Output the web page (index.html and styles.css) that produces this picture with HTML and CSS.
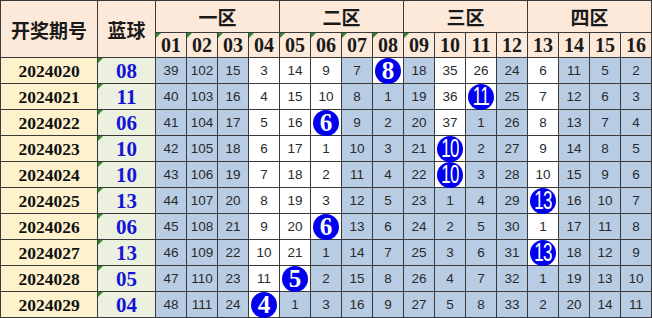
FILE: index.html
```html
<!DOCTYPE html>
<html lang="zh">
<head>
<meta charset="utf-8">
<title>蓝球遗漏</title>
<link rel="stylesheet" href="styles.css">
</head>
<body>
<table class="grid">
<colgroup>
<col class="c-date"><col class="c-blue">
<col class="c-n"><col class="c-n"><col class="c-n"><col class="c-n">
<col class="c-n"><col class="c-n"><col class="c-n"><col class="c-n">
<col class="c-n"><col class="c-n"><col class="c-n"><col class="c-n">
<col class="c-n"><col class="c-n"><col class="c-n"><col class="c-n">
</colgroup>
<thead>
<tr class="h1">
<th rowspan="2" class="hd">开奖期号</th>
<th rowspan="2" class="hd">蓝球</th>
<th colspan="4" class="zone">一区</th>
<th colspan="4" class="zone">二区</th>
<th colspan="4" class="zone">三区</th>
<th colspan="4" class="zone">四区</th>
</tr>
<tr class="h2">
<th class="num tri">01</th><th class="num tri">02</th><th class="num tri">03</th><th class="num tri">04</th>
<th class="num tri">05</th><th class="num tri">06</th><th class="num tri">07</th><th class="num tri">08</th>
<th class="num tri">09</th><th class="num">10</th><th class="num">11</th><th class="num">12</th>
<th class="num">13</th><th class="num">14</th><th class="num">15</th><th class="num">16</th>
</tr>
</thead>
<tbody>
<tr><td class="date">2024020</td><td class="blue tri">08</td>
<td>39</td><td>102</td><td>15</td><td class="w">3</td><td class="w">14</td><td class="w">9</td><td>7</td><td class="w"><span class="ball">8</span></td>
<td>18</td><td class="w">35</td><td class="w">26</td><td>24</td><td class="w">6</td><td>11</td><td>5</td><td>2</td></tr>
<tr><td class="date">2024021</td><td class="blue tri">11</td>
<td>40</td><td>103</td><td>16</td><td class="w">4</td><td class="w">15</td><td class="w">10</td><td>8</td><td>1</td>
<td>19</td><td class="w">36</td><td class="w"><span class="ball two"><span class="narrow">11</span></span></td><td>25</td><td class="w">7</td><td>12</td><td>6</td><td>3</td></tr>
<tr><td class="date">2024022</td><td class="blue tri">06</td>
<td>41</td><td>104</td><td>17</td><td class="w">5</td><td class="w">16</td><td class="w"><span class="ball">6</span></td><td>9</td><td>2</td>
<td>20</td><td class="w">37</td><td>1</td><td>26</td><td class="w">8</td><td>13</td><td>7</td><td>4</td></tr>
<tr><td class="date">2024023</td><td class="blue tri">10</td>
<td>42</td><td>105</td><td>18</td><td class="w">6</td><td class="w">17</td><td class="w">1</td><td>10</td><td>3</td>
<td>21</td><td class="w"><span class="ball two"><span class="narrow">10</span></span></td><td>2</td><td>27</td><td class="w">9</td><td>14</td><td>8</td><td>5</td></tr>
<tr><td class="date">2024024</td><td class="blue tri">10</td>
<td>43</td><td>106</td><td>19</td><td class="w">7</td><td class="w">18</td><td class="w">2</td><td>11</td><td>4</td>
<td>22</td><td class="w"><span class="ball two"><span class="narrow">10</span></span></td><td>3</td><td>28</td><td class="w">10</td><td>15</td><td>9</td><td>6</td></tr>
<tr><td class="date">2024025</td><td class="blue tri">13</td>
<td>44</td><td>107</td><td>20</td><td class="w">8</td><td class="w">19</td><td class="w">3</td><td>12</td><td>5</td>
<td>23</td><td>1</td><td>4</td><td>29</td><td class="w"><span class="ball two"><span class="narrow">13</span></span></td><td>16</td><td>10</td><td>7</td></tr>
<tr><td class="date">2024026</td><td class="blue tri">06</td>
<td>45</td><td>108</td><td>21</td><td class="w">9</td><td class="w">20</td><td class="w"><span class="ball">6</span></td><td>13</td><td>6</td>
<td>24</td><td>2</td><td>5</td><td>30</td><td class="w">1</td><td>17</td><td>11</td><td>8</td></tr>
<tr><td class="date">2024027</td><td class="blue tri">13</td>
<td>46</td><td>109</td><td>22</td><td class="w">10</td><td class="w">21</td><td>1</td><td>14</td><td>7</td>
<td>25</td><td>3</td><td>6</td><td>31</td><td class="w"><span class="ball two"><span class="narrow">13</span></span></td><td>18</td><td>12</td><td>9</td></tr>
<tr><td class="date">2024028</td><td class="blue tri">05</td>
<td>47</td><td>110</td><td>23</td><td class="w">11</td><td class="w"><span class="ball">5</span></td><td>2</td><td>15</td><td>8</td>
<td>26</td><td>4</td><td>7</td><td>32</td><td>1</td><td>19</td><td>13</td><td>10</td></tr>
<tr><td class="date">2024029</td><td class="blue tri">04</td>
<td>48</td><td>111</td><td>24</td><td class="w"><span class="ball">4</span></td><td>1</td><td>3</td><td>16</td><td>9</td>
<td>27</td><td>5</td><td>8</td><td>33</td><td>2</td><td>20</td><td>14</td><td>11</td></tr>
</tbody>
</table>
</body>
</html>
```
FILE: styles.css
```css
html, body {
  margin: 0;
  padding: 0;
  background: #ffffff;
}

.grid {
  border-collapse: collapse;
  table-layout: fixed;
  width: 652px;
  font-family: "Liberation Sans", Arial, sans-serif;
}

.c-date { width: 97px; }
.c-blue { width: 58px; }
.c-n { width: 31px; }

.grid th,
.grid td {
  border: 1px solid #3a3a3a;
  padding: 0;
  text-align: center;
  vertical-align: middle;
  overflow: visible;
  white-space: nowrap;
}

.grid th {
  background: #fde9d9;
  color: #1a1a1a;
  font-weight: bold;
}

.h1 { height: 32px; }
.h2 { height: 25px; }

.hd {
  font-family: "Noto Sans CJK SC", sans-serif;
  font-size: 19px;
  font-weight: bold;
}

.zone {
  font-family: "Noto Sans CJK SC", sans-serif;
  font-size: 19px;
  font-weight: bold;
}

.num {
  font-family: "Liberation Serif", "Times New Roman", serif;
  font-size: 20px;
  font-weight: bold;
}

.grid tbody tr { height: 26px; }

.grid tbody td {
  background: #b8cce4;
  color: #2a2a2a;
  font-size: 13.5px;
  line-height: 20px;
  height: 25px;
}

.grid tbody td.w { background: #ffffff; }

.grid tbody td.date {
  background: #fef2cc;
  font-family: "Liberation Serif", "Times New Roman", serif;
  font-size: 17.5px;
  font-weight: bold;
  color: #111111;
}

.grid tbody td.blue {
  background: #ebf1de;
  font-family: "Liberation Serif", "Times New Roman", serif;
  font-size: 21px;
  font-weight: bold;
  color: #1414d8;
}

.tri { position: relative; }

.tri::before {
  content: "";
  position: absolute;
  left: 0;
  top: 0;
  border-top: 5px solid #2f8a2f;
  border-right: 5px solid transparent;
}

.ball {
  display: inline-flex;
  align-items: center;
  justify-content: center;
  width: 26px;
  height: 26px;
  margin: -4px 0;
  border-radius: 50%;
  background: #0000ee;
  color: #ffffff;
  font-family: "Liberation Serif", "Times New Roman", serif;
  font-size: 25px;
  font-weight: bold;
  line-height: 1;
  vertical-align: middle;
}

.ball.two {
  font-family: "Liberation Sans", Arial, sans-serif;
  font-weight: normal;
  font-size: 25px;
}

.narrow {
  display: inline-block;
  transform: scaleX(0.68);
  letter-spacing: -1px;
}
```
